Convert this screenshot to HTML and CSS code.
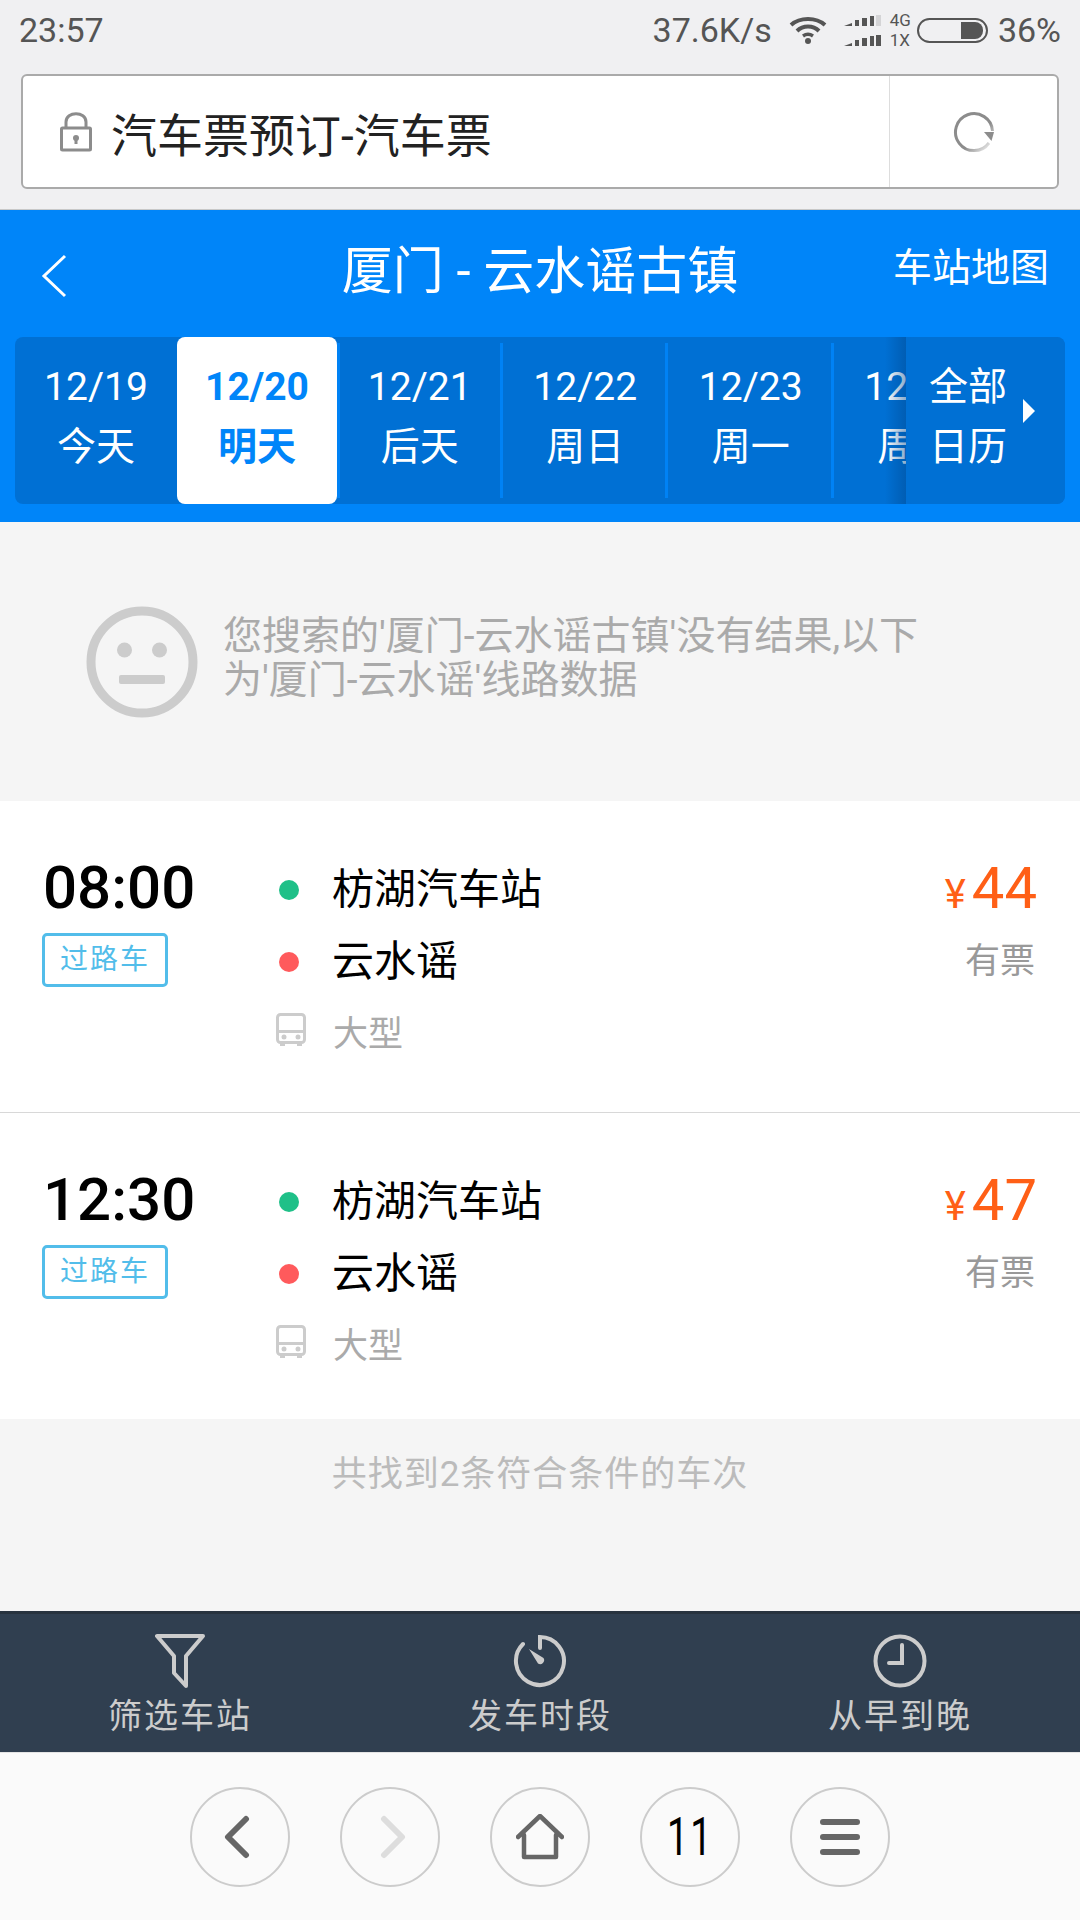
FILE: index.html
```html
<!DOCTYPE html>
<html lang="zh-CN">
<head>
<meta charset="UTF-8">
<title>汽车票预订-汽车票</title>
<link rel="stylesheet" href="styles.css">
</head>
<body>
  <div class="status-bar">
    <span class="clock-text">23:57</span>
    <div class="status-right">
      <span class="speed">37.6K/s</span>
      <svg class="wifi" width="38" height="28" viewBox="0 0 38 28">
        <path d="M2 9 C11 1 27 1 36 9" fill="none" stroke="#555" stroke-width="4"/>
        <path d="M8 15 C14 9 24 9 30 15" fill="none" stroke="#555" stroke-width="4"/>
        <path d="M14 20 C17 18 21 18 24 20" fill="none" stroke="#555" stroke-width="3.5"/>
        <circle cx="19" cy="25" r="3" fill="#555"/>
      </svg>
      <svg class="signal" width="37" height="31" viewBox="0 0 37 31">
        <path d="M0 11 L8 8 V11 Z M11 5 H15 V11 H11 Z M18 3 H23 V11 H18 Z M26 1 H30 V11 H26 Z" fill="#555"/>
        <rect x="32" y="0" width="5" height="11" fill="#d4d4d6"/>
        <path d="M0 31 L8 28 V31 Z M11 25 H15 V31 H11 Z M18 23 H23 V31 H18 Z M26 21 H30 V31 H26 Z M32 20 H37 V31 H32 Z" fill="#555"/>
      </svg>
      <div class="net-type"><span>4G</span><span>1X</span></div>
      <div class="battery"><div class="battery-fill"></div></div>
      <span class="percent">36%</span>
    </div>
  </div>

  <div class="url-wrap">
    <div class="url-bar">
      <div class="url-title">
        <svg width="32" height="40" viewBox="0 0 32 40">
          <path d="M6 17 V10 C6 -1 26 -1 26 10 V17" fill="none" stroke="#8c8c8c" stroke-width="3"/>
          <rect x="1.500" y="16" width="29" height="22" rx="1" fill="none" stroke="#8c8c8c" stroke-width="3"/>
          <circle cx="16" cy="26" r="3" fill="#8c8c8c"/>
          <rect x="14.500" y="26" width="3" height="6" fill="#8c8c8c"/>
        </svg>
        <span>汽车票预订-汽车票</span>
      </div>
      <div class="url-reload">
        <svg width="42" height="42" viewBox="0 0 42 42">
          <defs>
            <linearGradient id="fade" x1="0" y1="0" x2="1" y2="1">
              <stop offset="0.6" stop-color="#8c8c8c"/>
              <stop offset="1" stop-color="#8c8c8c" stop-opacity="0"/>
            </linearGradient>
          </defs>
          <path d="M36 32 A18.500 18.500 0 1 1 39.500 20" fill="none" stroke="url(#fade)" stroke-width="3"/>
          <path d="M31 21 H41 L38.500 30 Z" fill="#8c8c8c"/>
        </svg>
      </div>
    </div>
  </div>

  <div class="header">
    <div class="title-bar">
      <svg class="back" width="26" height="44" viewBox="0 0 26 44">
        <path d="M24 2 L3 22 L24 42" fill="none" stroke="#fff" stroke-width="3"/>
      </svg>
      <h1 class="title">厦门 - 云水谣古镇</h1>
      <a class="map-link">车站地图</a>
    </div>
    <div class="date-bar">
      <div class="tabs">
        <div class="tab tab-first"><span>12/19</span><span>今天</span></div>
        <div class="tab tab-active"><span>12/20</span><span>明天</span></div>
        <div class="tab"><span>12/21</span><span>后天</span></div>
        <div class="tab"><span>12/22</span><span>周日</span></div>
        <div class="tab"><span>12/23</span><span>周一</span></div>
        <div class="tab"><span>12/24</span><span>周二</span></div>
      </div>
      <div class="calendar">
        <div class="calendar-text"><span>全部</span><span>日历</span></div>
        <i class="calendar-arrow"></i>
      </div>
    </div>
  </div>

  <div class="notice">
    <svg width="112" height="112" viewBox="0 0 112 112">
      <circle cx="56" cy="56" r="51" fill="none" stroke="#ccc" stroke-width="9"/>
      <circle cx="38.500" cy="44" r="7.500" fill="#ccc"/>
      <circle cx="73.500" cy="44" r="7.500" fill="#ccc"/>
      <rect x="33" y="69" width="46" height="9" rx="2" fill="#ccc"/>
    </svg>
    <p class="notice-text">您搜索的'厦门-云水谣古镇'没有结果,以下<br>为'厦门-云水谣'线路数据</p>
  </div>

  <div class="list">
    <div class="row row-first">
      <div class="row-time">
        <div class="time">08:00</div>
        <div class="tag">过路车</div>
      </div>
      <div class="row-route">
        <div class="stop"><i class="dot dot-from"></i>枋湖汽车站</div>
        <div class="stop"><i class="dot dot-to"></i>云水谣</div>
        <div class="bus-type">
          <svg width="30" height="34" viewBox="0 0 30 34">
            <rect x="1.500" y="1.500" width="27" height="28" rx="3" fill="none" stroke="#ccc" stroke-width="3"/>
            <rect x="3" y="17" width="24" height="3" fill="#ccc"/>
            <circle cx="8" cy="24" r="2.500" fill="#ccc"/>
            <circle cx="22" cy="24" r="2.500" fill="#ccc"/>
            <rect x="4" y="29" width="5" height="4" fill="#ccc"/>
            <rect x="21" y="29" width="5" height="4" fill="#ccc"/>
          </svg>
          <span>大型</span>
        </div>
      </div>
      <div class="row-price">
        <div class="price"><span class="yen">¥</span>44</div>
        <div class="stock">有票</div>
      </div>
    </div>
    <div class="row">
      <div class="row-time">
        <div class="time">12:30</div>
        <div class="tag">过路车</div>
      </div>
      <div class="row-route">
        <div class="stop"><i class="dot dot-from"></i>枋湖汽车站</div>
        <div class="stop"><i class="dot dot-to"></i>云水谣</div>
        <div class="bus-type">
          <svg width="30" height="34" viewBox="0 0 30 34">
            <rect x="1.500" y="1.500" width="27" height="28" rx="3" fill="none" stroke="#ccc" stroke-width="3"/>
            <rect x="3" y="17" width="24" height="3" fill="#ccc"/>
            <circle cx="8" cy="24" r="2.500" fill="#ccc"/>
            <circle cx="22" cy="24" r="2.500" fill="#ccc"/>
            <rect x="4" y="29" width="5" height="4" fill="#ccc"/>
            <rect x="21" y="29" width="5" height="4" fill="#ccc"/>
          </svg>
          <span>大型</span>
        </div>
      </div>
      <div class="row-price">
        <div class="price"><span class="yen">¥</span>47</div>
        <div class="stock">有票</div>
      </div>
    </div>
  </div>

  <div class="result-count">共找到2条符合条件的车次</div>

  <div class="filter-bar">
    <div class="filter-item">
      <svg width="50" height="54" viewBox="0 0 50 54">
        <path d="M2 2 H48 L31 22 V52 L19 39 V22 Z" fill="none" stroke="#ccc" stroke-width="4" stroke-linejoin="round"/>
      </svg>
      <span>筛选车站</span>
    </div>
    <div class="filter-item">
      <svg width="54" height="54" viewBox="0 0 54 54">
        <path d="M27 14 V3 A24 24 0 1 1 10 10" fill="none" stroke="#ccc" stroke-width="4" stroke-linecap="round"/>
        <path d="M16 15 L30.500 24 A4 4 0 0 1 25 29.500 Z" fill="#ccc"/>
      </svg>
      <span>发车时段</span>
    </div>
    <div class="filter-item">
      <svg width="54" height="54" viewBox="0 0 54 54">
        <circle cx="27" cy="27" r="24.500" fill="none" stroke="#ccc" stroke-width="4"/>
        <path d="M29 11 V29 H16" fill="none" stroke="#ccc" stroke-width="4" stroke-linecap="round"/>
      </svg>
      <span>从早到晚</span>
    </div>
  </div>

  <div class="browser-bar">
    <div class="round-btn">
      <svg class="nudge-left" width="28" height="44" viewBox="0 0 28 44"><path d="M24 4 L6 22 L24 40" fill="none" stroke="#666" stroke-width="6" stroke-linecap="round" stroke-linejoin="round"/></svg>
    </div>
    <div class="round-btn">
      <svg class="nudge-right" width="28" height="44" viewBox="0 0 28 44"><path d="M4 4 L22 22 L4 40" fill="none" stroke="#ddd" stroke-width="6" stroke-linecap="round" stroke-linejoin="round"/></svg>
    </div>
    <div class="round-btn">
      <svg width="48" height="46" viewBox="0 0 48 46"><path d="M2 23 L24 2 L46 23 M8 21 V43 H40 V21" fill="none" stroke="#666" stroke-width="4.500" stroke-linecap="round" stroke-linejoin="round"/></svg>
    </div>
    <div class="round-btn"><span class="tab-count">11</span></div>
    <div class="round-btn">
      <svg width="40" height="36" viewBox="0 0 40 36">
        <rect x="0" y="0" width="40" height="6" rx="3" fill="#666"/>
        <rect x="0" y="15" width="40" height="6" rx="3" fill="#666"/>
        <rect x="0" y="30" width="40" height="6" rx="3" fill="#666"/>
      </svg>
    </div>
  </div>
</body>
</html>
```

FILE: styles.css
```css
* {
  box-sizing: border-box;
}

body {
  margin: 0;
  width: 1080px;
  height: 1920px;
  display: flex;
  flex-direction: column;
  overflow: hidden;
  background-color: #f5f5f5;
  font-family: Roboto, "Noto Sans CJK SC", sans-serif;
  font-weight: 400;
}

/* status bar */
.status-bar {
  height: 60px;
  padding: 0 19px;
  display: flex;
  justify-content: space-between;
  align-items: center;
  background-color: #f0f0f2;
  color: #555;
  font-size: 34px;
}

.status-right {
  display: flex;
  align-items: center;
}

.speed {
  margin-right: 17px;
}

.signal {
  margin-left: 17px;
}

.net-type {
  display: flex;
  flex-direction: column;
  margin-left: 9px;
  font-size: 17px;
  line-height: 20px;
}

.battery {
  width: 71px;
  height: 25px;
  margin-left: 6px;
  padding: 2px 3px 2px 0;
  display: flex;
  justify-content: flex-end;
  border: 2px solid #555;
  border-radius: 13px;
}

.battery-fill {
  width: 22px;
  background-color: #555;
  border-radius: 0 8px 8px 0;
}

.percent {
  margin-left: 10px;
}

/* url bar */
.url-wrap {
  height: 150px;
  padding: 14px 21px 21px 21px;
  background-color: #f0f0f2;
  border-bottom: 1px solid #c8c8c8;
}

.url-bar {
  height: 115px;
  display: flex;
  background-color: #fff;
  border: 2px solid #aaa;
  border-radius: 6px;
}

.url-title {
  flex: 1;
  padding-left: 37px;
  display: flex;
  align-items: center;
  gap: 19px;
  border-right: 1px solid #ddd;
  color: #222;
  font-size: 46px;
}

.url-reload {
  width: 167px;
  display: flex;
  align-items: center;
  justify-content: center;
}

/* blue header */
.header {
  height: 312px;
  background-color: #0085f9;
  color: #fff;
}

.title-bar {
  height: 127px;
  padding: 0 36px 14px;
  display: grid;
  grid-template-columns: 1fr auto 1fr;
  align-items: center;
}

.back {
  margin: 18px 0 0 5px;
}

.title {
  margin: 0;
  font-size: 51px;
  font-weight: 400;
}

.map-link {
  justify-self: end;
  margin: 0 -5px 6px 0;
  font-size: 39px;
}

.date-bar {
  position: relative;
  height: 167px;
  margin: 0 15px;
  background-color: #0070d4;
  border-radius: 8px;
  overflow: hidden;
}

.tabs {
  display: flex;
}

.tab {
  position: relative;
  flex: 0 0 165.500px;
  height: 167px;
  padding-top: 20px;
  display: flex;
  flex-direction: column;
  align-items: center;
  font-size: 39px;
  line-height: 60px;
}

.tab::after {
  content: "";
  position: absolute;
  top: 6px;
  bottom: 6px;
  right: 0;
  width: 3px;
  background-color: #0082f5;
}

.tab-first {
  flex-basis: 162px;
}

.tab-first::after {
  display: none;
}

.tab-active {
  flex-basis: 160px;
  background-color: #fff;
  border-radius: 8px;
  color: #0085f9;
  font-weight: 700;
}

.tab-active::after {
  right: -3px;
}

.calendar {
  position: absolute;
  top: 0;
  right: 0;
  bottom: 0;
  width: 159px;
  padding: 20px 0 0 23px;
  display: flex;
  background-color: #0070d4;
  border-radius: 8px;
  font-size: 39px;
  line-height: 60px;
}

.calendar::before {
  content: "";
  position: absolute;
  top: 0;
  bottom: 0;
  left: -21px;
  width: 21px;
  background: linear-gradient(to right, rgba(0, 70, 140, 0), rgba(0, 70, 140, 0.45));
}

.calendar-text {
  display: flex;
  flex-direction: column;
}

.calendar-arrow {
  margin: 42px 0 0 16px;
  width: 0;
  height: 0;
  border-left: 12px solid #fff;
  border-top: 12px solid transparent;
  border-bottom: 12px solid transparent;
}

/* no result notice */
.notice {
  height: 279px;
  padding: 0 0 0 86px;
  display: flex;
  align-items: center;
  gap: 25px;
}

.notice-text {
  margin: 0 0 8px;
  color: #aaa;
  font-size: 39px;
  line-height: 44px;
}

/* result rows */
.list {
  background-color: #fff;
}

.row {
  height: 306px;
  padding: 53px 43px 0;
  display: flex;
}

.row-first {
  height: 312px;
  border-bottom: 1px solid #d8d8d8;
}

.row-time {
  width: 234px;
}

.time {
  color: #000;
  font-size: 60px;
  font-weight: 500;
  line-height: 68px;
}

.tag {
  width: 126px;
  height: 54px;
  margin: 11px 0 0 -1px;
  border: 3px solid #52bdea;
  border-radius: 5px;
  color: #52bdea;
  font-size: 28px;
  line-height: 47px;
  letter-spacing: 2px;
  text-align: center;
}

.row-route {
  flex: 1;
}

.stop {
  height: 72px;
  padding-bottom: 10px;
  display: flex;
  align-items: center;
  color: #000;
  font-size: 42px;
}

.dot {
  width: 20px;
  height: 20px;
  margin: 10px 33px 0 2px;
  border-radius: 50%;
}

.dot-from {
  background-color: #1fc088;
}

.dot-to {
  background-color: #ff5a5c;
}

.bus-type {
  height: 64px;
  display: flex;
  align-items: center;
  gap: 27px;
  margin-left: -1px;
  color: #aaa;
  font-size: 35px;
}

.row-price {
  text-align: right;
}

.price {
  color: #ff5f16;
  font-size: 58px;
  line-height: 68px;
}

.yen {
  margin-right: 6px;
  font-size: 40px;
}

.stock {
  margin: 11px 2px 0 0;
  color: #999;
  font-size: 35px;
  line-height: 44px;
}

.result-count {
  flex: 1;
  padding-top: 36px;
  color: #bbb;
  font-size: 35px;
  line-height: 40px;
  letter-spacing: 1px;
  text-align: center;
}

/* bottom filters */
.filter-bar {
  height: 141px;
  padding-top: 20px;
  display: grid;
  grid-template-columns: repeat(3, 360px);
  background-color: #303f50;
  border-top: 3px solid #28333f;
}

.filter-item {
  display: flex;
  flex-direction: column;
  align-items: center;
  gap: 8px;
  color: #ccc;
  font-size: 34px;
  line-height: 40px;
  letter-spacing: 2px;
}

/* browser toolbar */
.browser-bar {
  height: 168px;
  display: flex;
  justify-content: center;
  align-items: center;
  gap: 50px;
  background-color: #fafafa;
  border-top: 1px solid #e4e4e4;
}

.round-btn {
  width: 100px;
  height: 100px;
  display: flex;
  align-items: center;
  justify-content: center;
  border: 2px solid #ccc;
  border-radius: 50%;
}

.nudge-left {
  margin-right: 8px;
}

.nudge-right {
  margin-left: 8px;
}

/* digits are narrower than Roboto's */
.tab-count {
  display: inline-block;
  color: #000;
  font-size: 54px;
  letter-spacing: 3px;
  transform: scaleX(0.7);
}
```
